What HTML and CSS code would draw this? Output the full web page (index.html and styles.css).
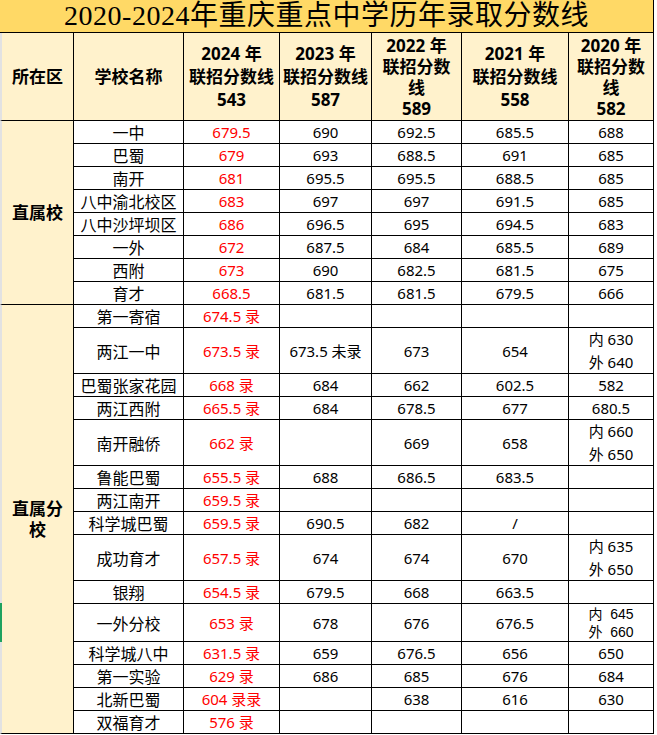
FILE: index.html
```html
<!DOCTYPE html>
<html lang="zh-CN">
<head>
<meta charset="utf-8">
<title>2020-2024年重庆重点中学历年录取分数线</title>
<link rel="stylesheet" href="styles.css">
</head>
<body>
<div class="sheet">
  <div class="cell title">2020-2024年重庆重点中学历年录取分数线</div>

  <div class="cell head region">所在区</div>
  <div class="cell head">学校名称</div>
  <div class="cell head l3"><div>2024 年<br>联招分数线<br>543</div></div>
  <div class="cell head l3"><div>2023 年<br>联招分数线<br>587</div></div>
  <div class="cell head l4"><div>2022 年<br>联招分数<br>线<br>589</div></div>
  <div class="cell head l3"><div>2021 年<br>联招分数线<br>558</div></div>
  <div class="cell head l4"><div>2020 年<br>联招分数<br>线<br>582</div></div>

  <div class="cell region group1">直属校</div>
  <div class="cell name">一中</div><div class="cell r">679.5</div><div class="cell">690</div><div class="cell">692.5</div><div class="cell">685.5</div><div class="cell">688</div>
  <div class="cell name">巴蜀</div><div class="cell r">679</div><div class="cell">693</div><div class="cell">688.5</div><div class="cell">691</div><div class="cell">685</div>
  <div class="cell name">南开</div><div class="cell r">681</div><div class="cell">695.5</div><div class="cell">695.5</div><div class="cell">688.5</div><div class="cell">685</div>
  <div class="cell name">八中渝北校区</div><div class="cell r">683</div><div class="cell">697</div><div class="cell">697</div><div class="cell">691.5</div><div class="cell">685</div>
  <div class="cell name">八中沙坪坝区</div><div class="cell r">686</div><div class="cell">696.5</div><div class="cell">695</div><div class="cell">694.5</div><div class="cell">683</div>
  <div class="cell name">一外</div><div class="cell r">672</div><div class="cell">687.5</div><div class="cell">684</div><div class="cell">685.5</div><div class="cell">689</div>
  <div class="cell name">西附</div><div class="cell r">673</div><div class="cell">690</div><div class="cell">682.5</div><div class="cell">681.5</div><div class="cell">675</div>
  <div class="cell name">育才</div><div class="cell r">668.5</div><div class="cell">681.5</div><div class="cell">681.5</div><div class="cell">679.5</div><div class="cell">666</div>

  <div class="cell region group2"><div>直属分<br>校</div></div>
  <div class="cell name">第一寄宿</div><div class="cell r">674.5 录</div><div class="cell"></div><div class="cell"></div><div class="cell"></div><div class="cell"></div>
  <div class="cell name">两江一中</div><div class="cell r">673.5 录</div><div class="cell">673.5 未录</div><div class="cell">673</div><div class="cell">654</div><div class="cell two"><div>内 630<br>外 640</div></div>
  <div class="cell name">巴蜀张家花园</div><div class="cell r">668 录</div><div class="cell">684</div><div class="cell">662</div><div class="cell">602.5</div><div class="cell">582</div>
  <div class="cell name">两江西附</div><div class="cell r">665.5 录</div><div class="cell">684</div><div class="cell">678.5</div><div class="cell">677</div><div class="cell">680.5</div>
  <div class="cell name">南开融侨</div><div class="cell r">662 录</div><div class="cell"></div><div class="cell">669</div><div class="cell">658</div><div class="cell two"><div>内 660<br>外 650</div></div>
  <div class="cell name">鲁能巴蜀</div><div class="cell r">655.5 录</div><div class="cell">688</div><div class="cell">686.5</div><div class="cell">683.5</div><div class="cell"></div>
  <div class="cell name">两江南开</div><div class="cell r">659.5 录</div><div class="cell"></div><div class="cell"></div><div class="cell"></div><div class="cell"></div>
  <div class="cell name">科学城巴蜀</div><div class="cell r">659.5 录</div><div class="cell">690.5</div><div class="cell">682</div><div class="cell">/</div><div class="cell"></div>
  <div class="cell name">成功育才</div><div class="cell r">657.5 录</div><div class="cell">674</div><div class="cell">674</div><div class="cell">670</div><div class="cell two"><div>内 635<br>外 650</div></div>
  <div class="cell name">银翔</div><div class="cell r">654.5 录</div><div class="cell">679.5</div><div class="cell">668</div><div class="cell">663.5</div><div class="cell"></div>
  <div class="cell name">一外分校</div><div class="cell r">653 录</div><div class="cell">678</div><div class="cell">676</div><div class="cell">676.5</div><div class="cell tight"><div class="clip">内&nbsp; 645<br>外&nbsp; 660</div></div>
  <div class="cell name">科学城八中</div><div class="cell r">631.5 录</div><div class="cell">659</div><div class="cell">676.5</div><div class="cell">656</div><div class="cell">650</div>
  <div class="cell name">第一实验</div><div class="cell r">629 录</div><div class="cell">686</div><div class="cell">685</div><div class="cell">676</div><div class="cell">684</div>
  <div class="cell name">北新巴蜀</div><div class="cell r">604 录录</div><div class="cell"></div><div class="cell">638</div><div class="cell">616</div><div class="cell">630</div>
  <div class="cell name">双福育才</div><div class="cell r">576 录</div><div class="cell"></div><div class="cell"></div><div class="cell"></div><div class="cell"></div>

  <div class="marker"></div>
</div>
</body>
</html>
```

FILE: styles.css
```css
html, body {
  margin: 0;
  padding: 0;
  background: #ffffff;
}

.sheet {
  position: relative;
  display: grid;
  width: 654px;
  grid-template-columns: 74px 110px 96px 92px 90px 107px 85px;
  grid-template-rows:
    33px 88px
    23px 23px 23px 23px 23px 23px 23px 23px
    23px 46px 23px 23px 46px 23px 23px 23px 46px 23px 38px 23px 23px 23px 23px;
  font-family: "Noto Sans", "Noto Sans CJK SC", sans-serif;
  font-size: 15px;
  color: #000;
}

.cell {
  box-sizing: border-box;
  border-right: 1px solid #000;
  border-bottom: 1px solid #000;
  display: flex;
  align-items: center;
  justify-content: center;
  text-align: center;
  line-height: 20px;
  white-space: nowrap;
  overflow: hidden;
}

.title {
  grid-column: 1 / -1;
  background: #ffd966;
  font-family: "Liberation Serif", "Noto Sans CJK SC", serif;
  font-size: 28px;
  line-height: 32px;
  letter-spacing: 0.5px;
  padding-bottom: 1px;
}

.head {
  background: #fff2cc;
  font-weight: bold;
  font-size: 17px;
}

.head.l3 { line-height: 23px; }
.head.l4 { line-height: 21px; padding-top: 1px; }

.region {
  background: #fff2cc;
  border-left: 2px solid #e2e2e2;
  font-weight: bold;
  font-size: 17px;
  line-height: 21px;
}

.group1 { grid-row: span 8; }
.group2 { grid-row: span 15; }

.name {
  font-family: "Noto Sans CJK SC", sans-serif;
  font-size: 16px;
}

.r { color: #ff0000; }

.two { line-height: 23px; }

.tight {
  align-items: flex-start;
  padding-top: 1px;
}

.tight .clip {
  line-height: 18px;
  font-family: "Liberation Sans", "Noto Sans CJK SC", sans-serif;
  font-size: 14px;
}

.marker {
  position: absolute;
  left: 0;
  top: 603px;
  width: 2px;
  height: 39px;
  background: #1ea25f;
}
```
